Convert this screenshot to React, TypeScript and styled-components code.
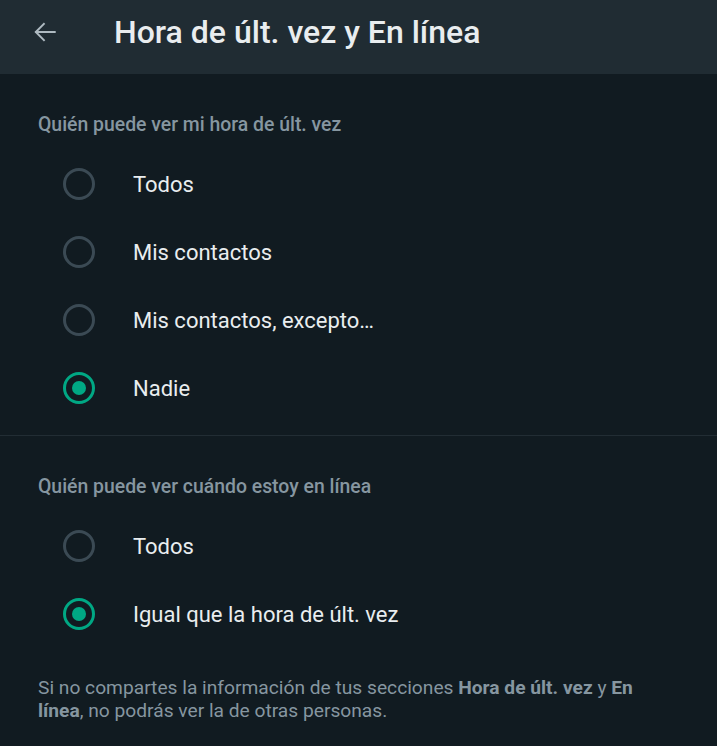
import React, { useState } from "react";
import styled, { createGlobalStyle } from "styled-components";

const Global = createGlobalStyle`
  html, body { margin: 0; padding: 0; background: #111b21; }
  body { font-family: Roboto, "Noto Sans", "Liberation Sans", sans-serif; -webkit-font-smoothing: antialiased; }
`;

const Page = styled.div`
  width: 717px;
  min-height: 746px;
  background: #111b21;
  display: flex;
  flex-direction: column;
`;

const TopBar = styled.header`
  height: 74px;
  background: #202c33;
  display: flex;
  align-items: center;
  padding-left: 30px;
  box-sizing: border-box;
`;

const BackButton = styled.button`
  width: 30px;
  height: 30px;
  padding: 0;
  border: none;
  background: transparent;
  display: flex;
  align-items: center;
  justify-content: center;
  margin-right: 54px;
  margin-top: -10px;
`;

const Title = styled.h1`
  margin: 0;
  margin-top: -10px;
  font-size: 32px;
  font-weight: 500;
  color: #e9edef;
`;

const Section = styled.section<{ $divider?: boolean }>`
  padding: 38px 0 13px;
  border-bottom: ${(p) => (p.$divider ? "1px solid #222d34" : "none")};
`;

const SectionTitle = styled.div`
  padding-left: 38px;
  font-size: 19.4px;
  line-height: 25px;
  font-weight: 500;
  color: #8696a0;
  margin-bottom: 13px;
`;

const Row = styled.label`
  height: 68px;
  display: flex;
  align-items: center;
  padding-left: 63px;
  cursor: pointer;
`;

const Radio = styled.span<{ $on: boolean }>`
  width: 32px;
  height: 32px;
  box-sizing: border-box;
  border-radius: 50%;
  border: 3px solid ${(p) => (p.$on ? "#00a884" : "#3b4a54")};
  display: flex;
  align-items: center;
  justify-content: center;
  margin-right: 38px;
  flex-shrink: 0;
  &::after {
    content: "";
    width: 14px;
    height: 14px;
    border-radius: 50%;
    background: #00a884;
    display: ${(p) => (p.$on ? "block" : "none")};
  }
`;

const Label = styled.span`
  font-size: 22px;
  color: #e9edef;
`;

const Note = styled.p`
  margin: 0;
  padding: 15px 55px 0 38px;
  font-size: 19.2px;
  line-height: 23px;
  color: #8696a0;
  b { font-weight: 700; }
`;

type Group = { title: string; options: string[]; initial: number };

const groups: Group[] = [
  {
    title: "Quién puede ver mi hora de últ. vez",
    options: ["Todos", "Mis contactos", "Mis contactos, excepto…", "Nadie"],
    initial: 3,
  },
  {
    title: "Quién puede ver cuándo estoy en línea",
    options: ["Todos", "Igual que la hora de últ. vez"],
    initial: 1,
  },
];

function RadioGroup({ g, divider }: { g: Group; divider?: boolean }) {
  const [sel, setSel] = useState(g.initial);
  return (
    <Section $divider={divider}>
      <SectionTitle>{g.title}</SectionTitle>
      {g.options.map((o, i) => (
        <Row key={o} onClick={() => setSel(i)}>
          <Radio $on={sel === i} />
          <Label>{o}</Label>
        </Row>
      ))}
    </Section>
  );
}

export default function App() {
  return (
    <Page>
      <Global />
      <TopBar>
        <BackButton aria-label="Atrás">
          <svg width="26" height="26" viewBox="0 0 24 24" fill="none" stroke="#aebac1" strokeWidth="1.8" strokeLinecap="square">
            <path d="M21 12H4" />
            <path d="M11 4.5L3.5 12L11 19.5" />
          </svg>
        </BackButton>
        <Title>Hora de últ. vez y En línea</Title>
      </TopBar>
      <RadioGroup g={groups[0]} divider />
      <RadioGroup g={groups[1]} />
      <Note>
        Si no compartes la información de tus secciones <b>Hora de últ. vez</b> y <b>En línea</b>, no podrás ver la de otras personas.
      </Note>
    </Page>
  );
}
